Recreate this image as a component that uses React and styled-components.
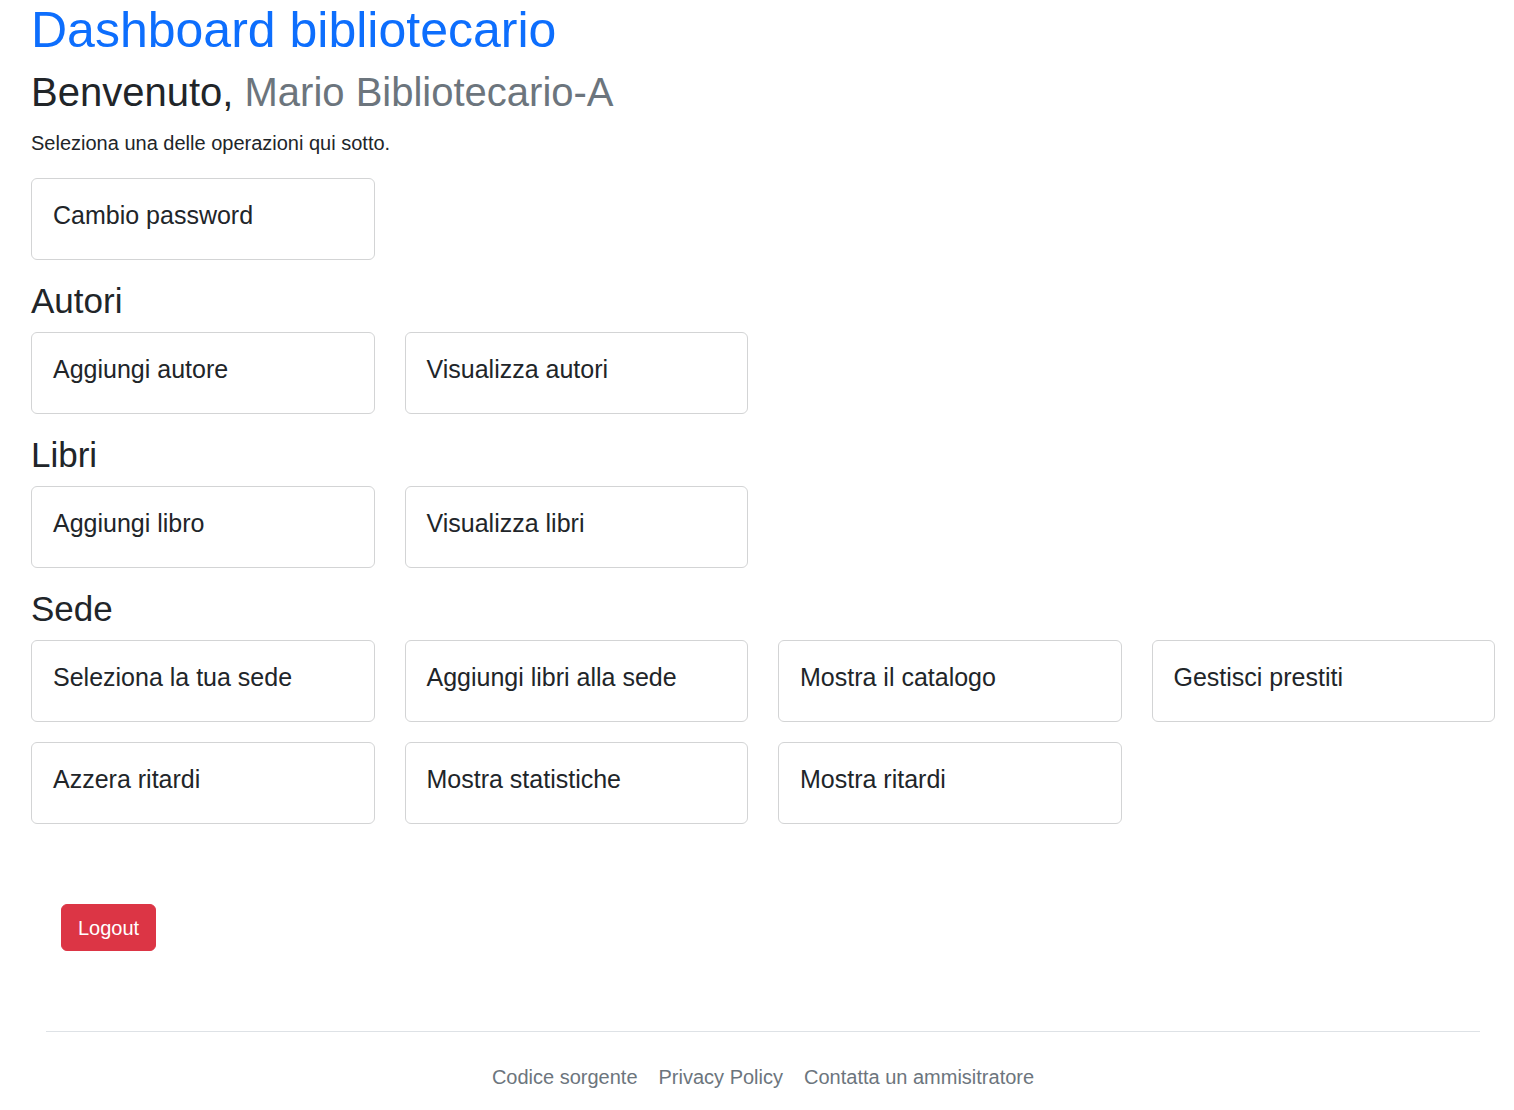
import React from 'react';
import styled, { createGlobalStyle } from 'styled-components';

const GlobalStyle = createGlobalStyle`
  body {
    margin: 0;
    background: #fff;
    color: #212529;
    font-family: "Liberation Sans", Arial, sans-serif;
  }
`;

const sections = [
  { title: 'Autori', items: ['Aggiungi autore', 'Visualizza autori'] },
  { title: 'Libri', items: ['Aggiungi libro', 'Visualizza libri'] },
  {
    title: 'Sede',
    items: [
      'Seleziona la tua sede',
      'Aggiungi libri alla sede',
      'Mostra il catalogo',
      'Gestisci prestiti',
      'Azzera ritardi',
      'Mostra statistiche',
      'Mostra ritardi',
    ],
  },
];

const App = () => {
  return (
    <>
      <GlobalStyle />
      <Page>
        <Title>Dashboard bibliotecario</Title>
        <Welcome>
          Benvenuto, <Muted>Mario Bibliotecario-A</Muted>
        </Welcome>
        <Lead>Seleziona una delle operazioni qui sotto.</Lead>

        <CardGrid>
          <Card>
            <CardLabel>Cambio password</CardLabel>
          </Card>
        </CardGrid>

        {sections.map((section) => (
          <React.Fragment key={section.title}>
            <SectionTitle>{section.title}</SectionTitle>
            <CardGrid>
              {section.items.map((item) => (
                <Card key={item}>
                  <CardLabel>{item}</CardLabel>
                </Card>
              ))}
            </CardGrid>
          </React.Fragment>
        ))}

        <LogoutRow>
          <LogoutButton>Logout</LogoutButton>
        </LogoutRow>
      </Page>

      <Footer>
        <FooterLinks>
          <FooterLink href="#">Codice sorgente</FooterLink>
          <FooterLink href="#">Privacy Policy</FooterLink>
          <FooterLink href="#">Contatta un ammisitratore</FooterLink>
        </FooterLinks>
      </Footer>
    </>
  );
};

export default App;

const Page = styled.main`
  padding: 0 19px 0 31px;
`;

const Title = styled.h1`
  margin: 0 0 8px;
  font-size: 50px;
  font-weight: 400;
  line-height: 1.2;
  color: #0d6efd;
`;

const Welcome = styled.h2`
  margin: 0 0 12px;
  font-size: 40px;
  font-weight: 400;
  line-height: 1.2;
  color: #212529;
`;

const Muted = styled.span`
  color: #6c757d;
`;

const Lead = styled.p`
  margin: 0 0 20px;
  font-size: 20px;
  line-height: 1.5;
`;

const SectionTitle = styled.h3`
  margin: 0 0 11px;
  font-size: 35px;
  font-weight: 400;
  line-height: 41px;
`;

const CardGrid = styled.div`
  display: grid;
  grid-template-columns: repeat(4, 1fr);
  column-gap: 30px;
  row-gap: 20px;
  margin-bottom: 20px;
`;

const Card = styled.a`
  display: block;
  padding: 21px;
  border: 1px solid #d3d4d5;
  border-radius: 6px;
  background: #fff;
  color: #212529;
  text-decoration: none;
  cursor: pointer;
`;

const CardLabel = styled.h5`
  margin: 0 0 8px;
  font-size: 25px;
  font-weight: 400;
  line-height: 1.2;
`;

const LogoutRow = styled.div`
  padding: 60px 30px 0;
`;

const LogoutButton = styled.button`
  height: 47px;
  padding: 0 16px;
  border: 1px solid #dc3545;
  border-radius: 6px;
  background: #dc3545;
  color: #fff;
  font-family: inherit;
  font-size: 20px;
  line-height: 1.5;
  cursor: pointer;
`;

const Footer = styled.footer`
  margin: 80px 34px 0 46px;
  padding-bottom: 20px;
  border-top: 1px solid #dee2e6;
`;

const FooterLinks = styled.nav`
  display: flex;
  justify-content: center;
  gap: 21px;
  padding-top: 30px;
`;

const FooterLink = styled.a`
  font-size: 20px;
  line-height: 1.5;
  color: #6c757d;
  text-decoration: none;
`;
